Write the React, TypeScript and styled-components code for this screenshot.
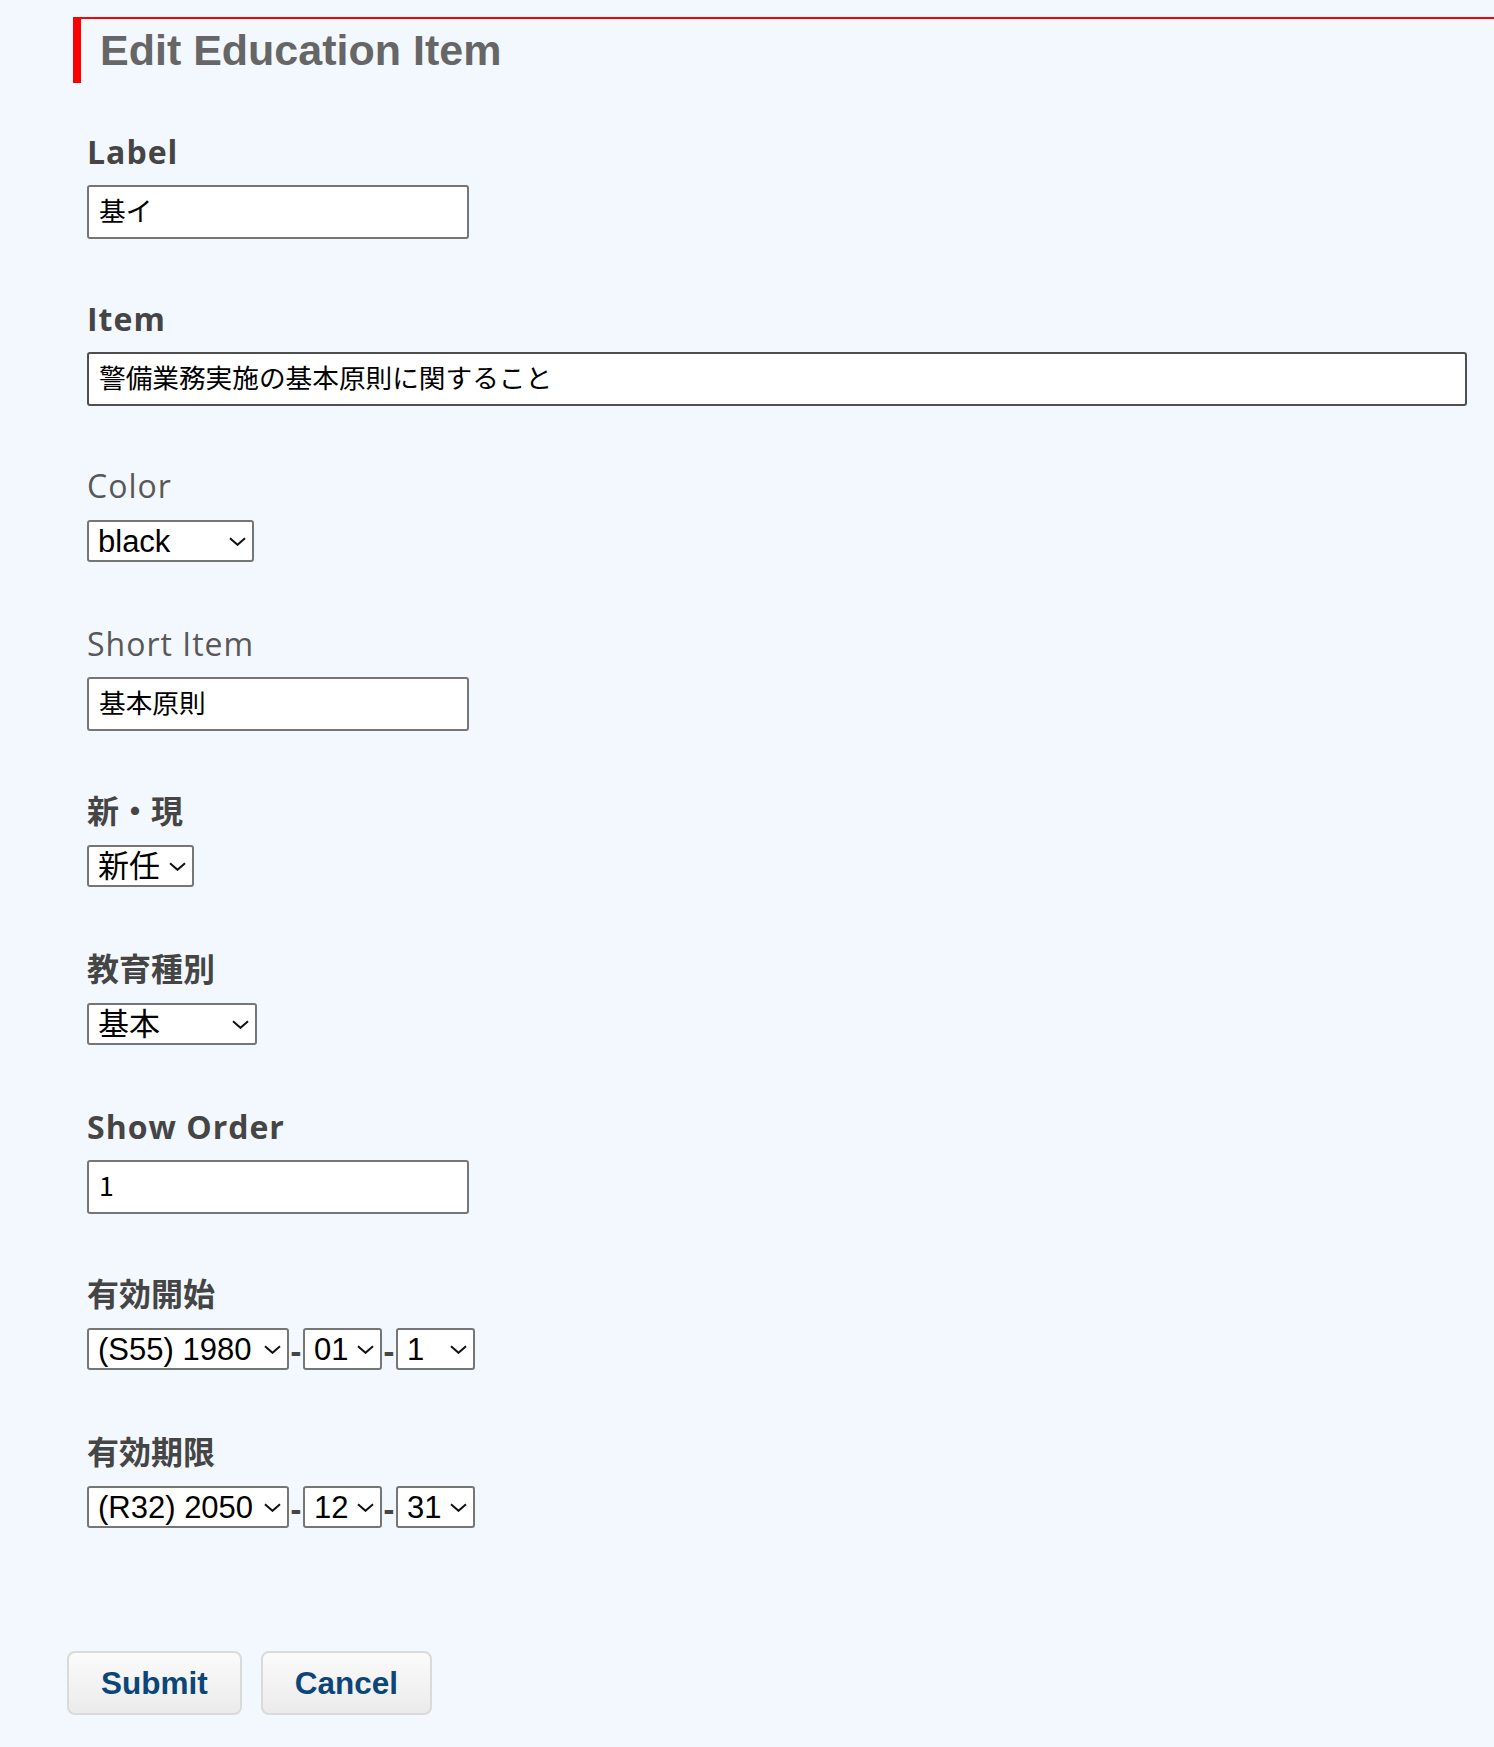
import React from 'react'
import styled, { createGlobalStyle } from 'styled-components'

const GlobalStyle = createGlobalStyle`
  html, body {
    margin: 0;
    padding: 0;
    background: #f3f8fe;
  }
`

const LABEL_FONT = `"Open Sans", "Noto Sans CJK JP", sans-serif`
const INPUT_FONT = `"Noto Sans CJK JP", "DejaVu Sans", sans-serif`
const SELECT_FONT = `"Liberation Sans", Arial, "Noto Sans CJK JP", sans-serif`

interface Option {
  value: string
  label: string
}

const Chevron: React.FC = () => (
  <ChevronIcon width="17" height="9" viewBox="0 0 17 9">
    <path d="M1 1.2 L8.5 7.8 L16 1.2" fill="none" stroke="#111" strokeWidth="2" />
  </ChevronIcon>
)

const DropDown: React.FC<{ width: number; value: string; options: Option[] }> = ({
  width,
  value,
  options,
}) => (
  <SelectWrap>
    <Select $width={width} defaultValue={value}>
      {options.map((o) => (
        <option key={o.value} value={o.value}>
          {o.label}
        </option>
      ))}
    </Select>
    <Chevron />
  </SelectWrap>
)

const opts = (list: string[]): Option[] => list.map((v) => ({ value: v, label: v }))

const App: React.FC = () => {
  return (
    <Page>
      <GlobalStyle />
      <Heading>Edit Education Item</Heading>

      <Form>
        <Field>
          <Label $latin>Label</Label>
          <TextInput $width={382} defaultValue="基イ" />
        </Field>

        <Field>
          <Label $latin>Item</Label>
          <TextInput $width={1380} $hover defaultValue="警備業務実施の基本原則に関すること" />
        </Field>

        <Field>
          <Label $latin $light>Color</Label>
          <Control>
            <DropDown width={167} value="black" options={opts(['black', 'red', 'blue', 'green'])} />
          </Control>
        </Field>

        <Field>
          <Label $latin $light>Short Item</Label>
          <TextInput $width={382} defaultValue="基本原則" />
        </Field>

        <Field>
          <Label>新・現</Label>
          <Control>
            <DropDown width={107} value="新任" options={opts(['新任', '現任'])} />
          </Control>
        </Field>

        <Field>
          <Label>教育種別</Label>
          <Control>
            <DropDown width={170} value="基本" options={opts(['基本', '業務別'])} />
          </Control>
        </Field>

        <Field>
          <Label $latin>Show Order</Label>
          <TextInput $width={382} defaultValue="1" />
        </Field>

        <Field>
          <Label>有効開始</Label>
          <Control>
            <DateRow>
              <DropDown
                width={202}
                value="1980"
                options={[{ value: '1980', label: '(S55) 1980' }]}
              />
              <Dash>-</Dash>
              <DropDown width={79} value="01" options={opts(['01', '02', '12'])} />
              <Dash>-</Dash>
              <DropDown width={79} value="1" options={opts(['1', '2', '31'])} />
            </DateRow>
          </Control>
        </Field>

        <Field>
          <Label>有効期限</Label>
          <Control>
            <DateRow>
              <DropDown
                width={202}
                value="2050"
                options={[{ value: '2050', label: '(R32) 2050' }]}
              />
              <Dash>-</Dash>
              <DropDown width={79} value="12" options={opts(['01', '12'])} />
              <Dash>-</Dash>
              <DropDown width={79} value="31" options={opts(['1', '30', '31'])} />
            </DateRow>
          </Control>
        </Field>
      </Form>

      <Actions>
        <Button type="submit">Submit</Button>
        <Button type="button">Cancel</Button>
      </Actions>
    </Page>
  )
}

export default App

const Page = styled.div`
  min-height: 1747px;
  background: #f3f8fe;
  overflow: hidden;
`

const Heading = styled.h1`
  margin: 17px 0 0 73px;
  padding: 7px 0 8px 19px;
  border-top: 2px solid #ff0000;
  border-left: 8px solid #ff0000;
  font-family: "Liberation Sans", Arial, sans-serif;
  font-size: 43px;
  line-height: 49px;
  font-weight: bold;
  color: #666;
`

const Form = styled.form`
  display: flex;
  flex-direction: column;
  gap: 60px;
  padding: 49px 0 0 87px;
`

const Field = styled.div`
  display: flex;
  flex-direction: column;
  align-items: flex-start;
`

const Label = styled.label<{ $light?: boolean; $latin?: boolean }>`
  display: block;
  height: 40px;
  font-family: ${LABEL_FONT};
  font-size: 32px;
  line-height: 40px;
  font-weight: ${(p) => (p.$light ? 400 : 700)};
  letter-spacing: ${(p) => (p.$latin ? '1px' : '0')};
  color: ${(p) => (p.$light ? '#585858' : '#454545')};
`

const TextInput = styled.input<{ $width: number; $hover?: boolean }>`
  box-sizing: border-box;
  margin-top: 13px;
  width: ${(p) => p.$width}px;
  height: 54px;
  padding: 0 10px 5px;
  border: 2px solid ${(p) => (p.$hover ? '#4f4f4f' : '#767676')};
  border-radius: 3px;
  background: #fff;
  font-family: ${INPUT_FONT};
  font-size: 26.67px;
  color: #000;
  outline: none;
`

const Control = styled.div`
  margin: 14px 0 2px;
`

const DateRow = styled.div`
  display: flex;
  align-items: center;
  height: 42px;
`

const Dash = styled.span`
  width: 14px;
  height: 42px;
  padding-top: 3px;
  box-sizing: border-box;
  text-align: center;
  font-family: ${LABEL_FONT};
  font-size: 32px;
  font-weight: 700;
  line-height: 39px;
  color: #454545;
`

const SelectWrap = styled.div`
  position: relative;
  display: inline-block;
`

const Select = styled.select<{ $width: number }>`
  appearance: none;
  -webkit-appearance: none;
  box-sizing: border-box;
  display: block;
  width: ${(p) => p.$width}px;
  height: 42px;
  margin: 0;
  padding: 0 28px 0 9px;
  border: 2px solid #767676;
  border-radius: 3px;
  background: #fff;
  font-family: ${SELECT_FONT};
  font-size: 31px;
  color: #000;
  outline: none;
`

const ChevronIcon = styled.svg`
  position: absolute;
  right: 8px;
  top: 50%;
  margin-top: -4px;
  pointer-events: none;
`

const Actions = styled.div`
  display: flex;
  gap: 19px;
  margin-top: 121px;
  padding-left: 67px;
`

const Button = styled.button`
  box-sizing: border-box;
  height: 64px;
  padding: 0 32px;
  border: 2px solid #dadada;
  border-radius: 8px;
  background: linear-gradient(#fbfbfb, #ebebeb);
  font-family: "Liberation Sans", Arial, sans-serif;
  font-size: 31.5px;
  font-weight: bold;
  color: #0c4679;
  cursor: pointer;
`
